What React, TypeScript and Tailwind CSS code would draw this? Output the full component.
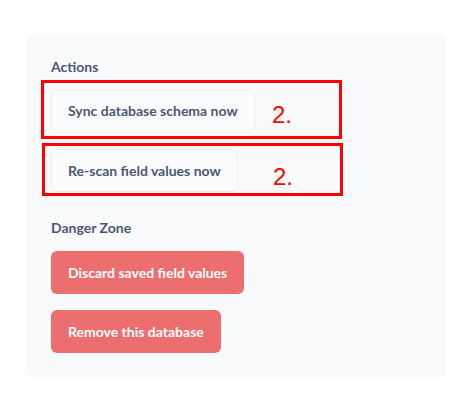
import React from 'react';

const ActionButton: React.FC<{ label: string; tall?: boolean }> = ({ label, tall }) => (
  <button
    className={`flex items-center px-4 rounded-md border border-[#eceef3] bg-[#fbfcfe] text-sm font-bold text-[#4c5773] ${tall ? 'h-[43px]' : 'h-[42px]'}`}
  >
    {label}
  </button>
);

const DangerButton: React.FC<{ label: string }> = ({ label }) => (
  <button className="flex items-center h-[43px] px-[17px] rounded-md bg-[#ed6e6e] text-sm font-bold text-white">
    {label}
  </button>
);

const markFont = { fontFamily: '"Liberation Sans", Arial, sans-serif' };

export default function App() {
  return (
    <div className="w-[474px] h-[412px] bg-white pt-[35px] pl-[27px]" style={{ fontFamily: 'Lato, "Open Sans", sans-serif' }}>
      <div className="w-[420px] h-[342px] rounded-lg bg-[#f9fafc] pl-6 pt-[22px]">
        <div className="text-sm leading-5 font-bold text-[#4c5773]">Actions</div>

        <div className="relative mt-[13px] w-fit">
          <ActionButton label="Sync database schema now" />
          {/* annotation box */}
          <div className="absolute left-[-10px] top-[-10px] w-[301px] h-[59px] border-[3px] border-[#ff0000] pl-[228px] pt-[18px]">
            <span className="block text-[24px] leading-7 text-[#ff0000]" style={markFont}>2.</span>
          </div>
        </div>

        <div className="relative mt-[17px] w-fit">
          <ActionButton label="Re-scan field values now" tall />
          <div className="absolute left-[-9px] top-[-6px] w-[301px] h-[53px] border-[3px] border-[#ff0000] pl-[228px] pt-[17px]">
            <span className="block text-[24px] leading-7 text-[#ff0000]" style={markFont}>2.</span>
          </div>
        </div>

        <div className="mt-[26px] text-sm leading-5 font-bold text-[#4c5773]">Danger Zone</div>
        <div className="mt-[13px] flex flex-col items-start gap-4">
          <DangerButton label="Discard saved field values" />
          <DangerButton label="Remove this database" />
        </div>
      </div>
    </div>
  );
}
